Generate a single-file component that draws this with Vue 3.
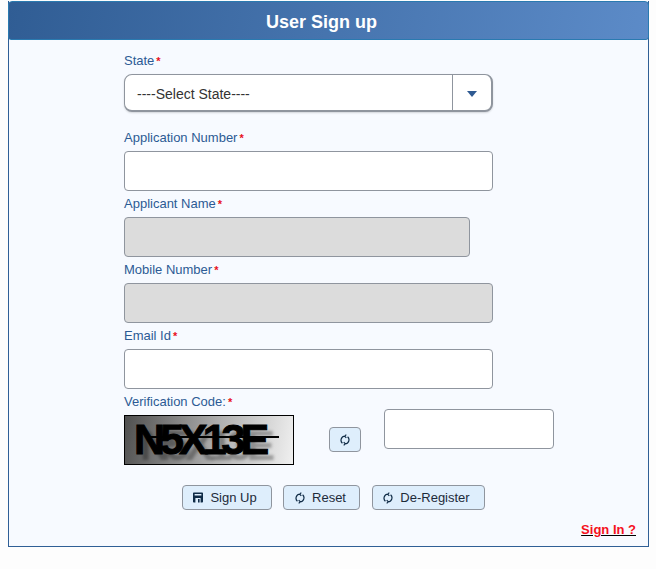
<script setup>
const fieldsAfterState = [
  { label: 'Application Number', disabled: false, short: false },
  { label: 'Applicant Name', disabled: true, short: true },
  { label: 'Mobile Number', disabled: true, short: false },
  { label: 'Email Id', disabled: false, short: false },
]
</script>

<template>
  <div class="page">
    <section class="panel">
      <h1 class="panel-title">User Sign up</h1>
      <form class="signup-form" @submit.prevent>
        <label class="field-label">State<span class="req">*</span></label>
        <div class="select-box">
          <span class="select-text">----Select State----</span>
          <span class="select-arrow"><i class="caret"></i></span>
        </div>

        <div class="fields">
          <div v-for="f in fieldsAfterState" :key="f.label" class="field">
            <label class="field-label">{{ f.label }}<span class="req">*</span></label>
            <input
              type="text"
              :class="['text-input', { 'text-input--short': f.short }]"
              :disabled="f.disabled"
            />
          </div>
        </div>

        <label class="field-label">Verification Code:<span class="req">*</span></label>
        <div class="captcha-row">
          <div class="captcha"><span class="captcha-text">N5X13E</span><i class="captcha-line"></i></div>
          <button type="button" class="btn btn--refresh">
            <svg class="icon" viewBox="1 0 10 12"><path d="M6 2.2A4 4 0 0 0 3.4 9.2M7.3.6 5.7 2.2 7.3 3.8M6 9.8A4 4 0 0 0 8.6 2.8M4.7 8.2 6.3 9.8 4.7 11.4" /></svg>
          </button>
          <input type="text" class="text-input captcha-input" />
        </div>

        <div class="actions">
          <button type="button" class="btn">
            <svg class="icon icon--save" viewBox="1 .4 10 11"><path fill-rule="evenodd" d="M1 1.6A.8.8 0 0 1 1.8.8h8.4a.8.8 0 0 1 .8.8v8.6a.8.8 0 0 1-.8.8H1.8a.8.8 0 0 1-.8-.8zM2.6 2.4v1.6h6.8V2.4zM3.4 6.4v4.6h5.2V6.4zM6 7.4h1.6v3.6H6z" /></svg>
            Sign Up
          </button>
          <button type="button" class="btn">
            <svg class="icon" viewBox="1 0 10 12"><path d="M6 2.2A4 4 0 0 0 3.4 9.2M7.3.6 5.7 2.2 7.3 3.8M6 9.8A4 4 0 0 0 8.6 2.8M4.7 8.2 6.3 9.8 4.7 11.4" /></svg>
            Reset
          </button>
          <button type="button" class="btn">
            <svg class="icon" viewBox="1 0 10 12"><path d="M6 2.2A4 4 0 0 0 3.4 9.2M7.3.6 5.7 2.2 7.3 3.8M6 9.8A4 4 0 0 0 8.6 2.8M4.7 8.2 6.3 9.8 4.7 11.4" /></svg>
            De-Register
          </button>
        </div>
      </form>
      <div class="signin-row"><a href="#" class="signin-link">Sign In ?</a></div>
    </section>
  </div>
</template>

<style>
html,
body {
  background: #fdfdfd;
}
</style>

<style scoped>
.page {
  height: 569px;
  padding: 1px 7px 0 8px;
  box-sizing: border-box;
  font-family: "Liberation Sans", Arial, sans-serif;
  overflow: hidden;
}

.panel {
  height: 546px;
  box-sizing: border-box;
  border: 1px solid #2f5f96;
  border-top: 0;
  background: #f7faff;
}

.panel-title {
  margin: 0 -1px;
  height: 39px;
  box-sizing: border-box;
  padding-right: 14px;
  border: 1px solid #2a7ab0;
  border-radius: 4px 4px 3px 3px;
  background: linear-gradient(100deg, #305d94 0%, #5c8bc8 100%);
  color: #fff;
  font-size: 18px;
  font-weight: 700;
  line-height: 41px;
  text-align: center;
}

.signup-form {
  margin-left: 115px;
  padding-top: 8px;
}

.field-label {
  display: block;
  height: 26px;
  font-size: 13px;
  line-height: 26px;
  color: #2c5a94;
}

.req {
  margin-left: 2px;
  color: #e8101c;
  font-size: 11px;
  font-weight: 700;
}

.select-box {
  display: flex;
  width: 369px;
  height: 38px;
  box-sizing: border-box;
  border: 1px solid #8f959e;
  border-right-width: 2px;
  border-bottom-width: 2px;
  border-radius: 8px;
  background: #fff;
  box-shadow: 0 1px 2px rgba(0, 0, 0, 0.15);
  margin-bottom: 13px;
}

.select-text {
  flex: 1;
  padding-left: 12px;
  font-size: 14px;
  line-height: 38px;
  color: #333;
}

.select-arrow {
  display: flex;
  align-items: center;
  justify-content: center;
  width: 38px;
  border-left: 1px solid #8f959e;
}

.caret {
  display: block;
  width: 0;
  height: 0;
  margin-top: 3px;
  border-left: 5px solid transparent;
  border-right: 5px solid transparent;
  border-top: 6px solid #2f5a92;
}

.field {
  display: block;
}

.text-input {
  display: block;
  width: 369px;
  height: 40px;
  box-sizing: border-box;
  padding: 0 10px;
  border: 1px solid #8f959e;
  border-radius: 4px;
  background: #fff;
  outline: none;
}

.text-input:disabled {
  background: #dcdcdc;
}

.text-input--short {
  width: 346px;
}

.captcha-row {
  display: flex;
  align-items: flex-start;
  height: 50px;
}

.captcha {
  position: relative;
  width: 170px;
  height: 50px;
  box-sizing: border-box;
  border: 1px solid #000;
  background: linear-gradient(100deg, #4f4f4f 0%, #b0b0b0 55%, #f0f0f0 100%);
  overflow: hidden;
}

.captcha-text {
  position: absolute;
  left: 9px;
  top: 0;
  font-family: "Liberation Sans", sans-serif;
  font-size: 43px;
  font-weight: 700;
  line-height: 46px;
  letter-spacing: -5px;
  color: #000;
  -webkit-text-stroke: 1px #000;
  text-shadow: 6px 6px 3px rgba(0, 0, 0, 0.3);
  white-space: nowrap;
}

.captcha-line {
  position: absolute;
  left: 22px;
  top: 20px;
  width: 132px;
  height: 2px;
  background: #000;
}

.btn {
  display: inline-flex;
  align-items: center;
  justify-content: center;
  gap: 7px;
  height: 25px;
  box-sizing: border-box;
  padding: 0 13px 0 9px;
  border: 1px solid #8f959e;
  border-radius: 4px;
  background: #deeefc;
  color: #1d2b3a;
  font-family: "Liberation Sans", Arial, sans-serif;
  font-size: 13px;
}

.btn--refresh {
  width: 32px;
  padding: 0;
  margin: 12px 0 0 35px;
}

.icon {
  width: 10px;
  height: 12px;
  fill: none;
  stroke: #0f2b46;
  stroke-width: 1.2;
}

.icon--save {
  height: 11px;
  fill: #0f2b46;
  stroke: none;
}

.captcha-input {
  width: 170px;
  margin: -6px 0 0 23px;
}

.actions {
  display: flex;
  gap: 11px;
  margin: 20px 0 0 58px;
}

.actions .btn:nth-child(1) {
  width: 90px;
}

.actions .btn:nth-child(2) {
  width: 77px;
  padding-left: 11px;
}

.actions .btn:nth-child(3) {
  width: 113px;
  margin-left: 1px;
}

.signin-row {
  margin-top: 10px;
  padding-right: 12px;
  text-align: right;
}

.signin-link {
  color: #f5101c;
  font-size: 13px;
  font-weight: 700;
  text-decoration-color: #000;
}
</style>
